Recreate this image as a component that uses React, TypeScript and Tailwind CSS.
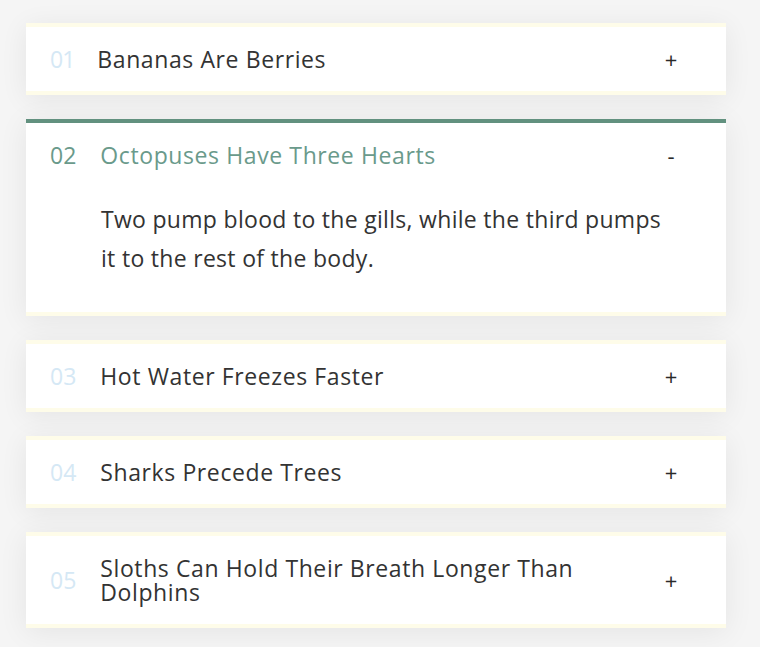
import React from "react";

const items = [
  { n: "01", t: "Bananas Are Berries" },
  { n: "02", t: "Octopuses Have Three Hearts", open: true },
  { n: "03", t: "Hot Water Freezes Faster" },
  { n: "04", t: "Sharks Precede Trees" },
  { n: "05", t: "Sloths Can Hold Their Breath Longer Than Dolphins" },
];

export default function App() {
  return (
    <div
      className="min-h-[647px] w-full bg-[#f5f5f5] px-[26px] pt-[23px] pb-[20px]"
      style={{ fontFamily: '"Open Sans", "Noto Sans", sans-serif' }}
    >
      <div className="flex w-[700px] flex-col gap-6">
        {items.map((it) => (
          <div
            key={it.n}
            className={
              it.open
                ? "border-y-4 border-t-[#62917f] border-b-[#fefce9] bg-white shadow-[0_4px_28px_rgba(0,0,0,0.07)]"
                : "border-y-4 border-[#fefce9] bg-white shadow-[0_4px_28px_rgba(0,0,0,0.07)]"
            }
          >
            <div className="flex items-center py-5 pl-6 pr-[43px]">
              <span
                className={
                  it.open
                    ? "mr-6 text-[23px] leading-6 text-[#6a9a8b]"
                    : it.n === "01"
                    ? "mr-[23px] text-[23px] leading-6 tracking-[-1px] text-[#d5e8f5]"
                    : "mr-6 text-[23px] leading-6 text-[#d5e8f5]"
                }
              >
                {it.n}
              </span>
              <span
                className={
                  it.open
                    ? "flex-1 text-[23px] leading-6 tracking-[0.6px] text-[#6a9a8b]"
                    : "flex-1 max-w-[500px] text-[23px] leading-6 tracking-[0.6px] text-[#333333]"
                }
              >
                {it.t}
              </span>
              <span className="ml-auto w-6 text-center text-[22px] font-medium leading-6 text-[#2a2a2a]">
                {it.open ? "-" : "+"}
              </span>
            </div>
            {it.open && (
              <div className="pl-[75px] pr-[40px] pt-[13px] pb-[35px] text-[23px] leading-[38.5px] tracking-[0.3px] text-[#333333]">
                Two pump blood to the gills, while the third pumps
                <br />
                it to the rest of the body.
              </div>
            )}
          </div>
        ))}
      </div>
    </div>
  );
}
